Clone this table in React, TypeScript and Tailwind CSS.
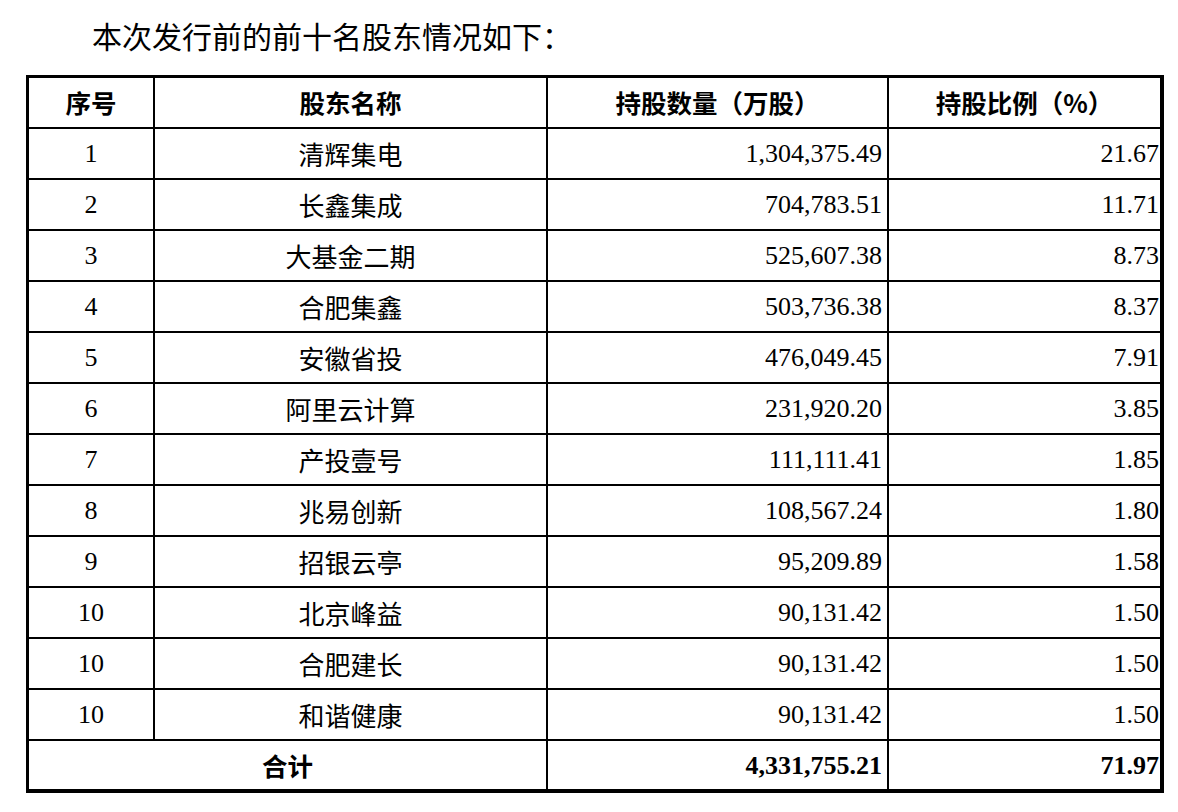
import React from "react";

const rows: [string, string, string, string][] = [
  ["1", "清辉集电", "1,304,375.49", "21.67"],
  ["2", "长鑫集成", "704,783.51", "11.71"],
  ["3", "大基金二期", "525,607.38", "8.73"],
  ["4", "合肥集鑫", "503,736.38", "8.37"],
  ["5", "安徽省投", "476,049.45", "7.91"],
  ["6", "阿里云计算", "231,920.20", "3.85"],
  ["7", "产投壹号", "111,111.41", "1.85"],
  ["8", "兆易创新", "108,567.24", "1.80"],
  ["9", "招银云亭", "95,209.89", "1.58"],
  ["10", "北京峰益", "90,131.42", "1.50"],
  ["10", "合肥建长", "90,131.42", "1.50"],
  ["10", "和谐健康", "90,131.42", "1.50"],
];

export default function App() {
  return (
    <div className="w-[1178px] h-[812px] bg-white overflow-hidden text-black font-['Liberation_Serif','Noto_Sans_CJK_SC',serif]">
      <div className="h-[75px] pl-[92px] pt-[19px] text-[30px] leading-[32px] font-['Noto_Sans_CJK_SC',sans-serif]">
        本次发行前的前十名股东情况如下：
      </div>
      <div className="ml-[26px] w-[1138px] border-black border-t-[3px] border-l-[3px] border-r-[4px] border-b-[4px] flex flex-col">
        <div className="flex h-[51px] border-b-2 border-black text-[25.5px] font-bold font-['Noto_Sans_CJK_SC',sans-serif]">
          <div className="w-[126px] border-r-2 border-black flex items-center justify-center">序号</div>
          <div className="w-[393px] border-r-2 border-black flex items-center justify-center">股东名称</div>
          <div className="w-[341px] border-r-2 border-black flex items-center justify-center">持股数量（万股）</div>
          <div className="flex-1 flex items-center justify-center">持股比例（%）</div>
        </div>
        {rows.map((r, i) => (
          <div key={i} className="flex h-[51px] border-b-2 border-black text-[26px]">
            <div className="w-[126px] border-r-2 border-black flex items-center justify-center">{r[0]}</div>
            <div className="w-[393px] border-r-2 border-black flex items-center justify-center font-['Noto_Sans_CJK_SC',sans-serif] text-[26px]">{r[1]}</div>
            <div className="w-[341px] border-r-2 border-black flex items-center justify-end pr-[5px]">{r[2]}</div>
            <div className="flex-1 flex items-center justify-end pr-[1px]">{r[3]}</div>
          </div>
        ))}
        <div className="flex h-[48px] text-[26px] font-bold">
          <div className="w-[519px] border-r-2 border-black flex items-center justify-center font-['Noto_Sans_CJK_SC',sans-serif] text-[25.5px]">合计</div>
          <div className="w-[341px] border-r-2 border-black flex items-center justify-end pr-[5px]">4,331,755.21</div>
          <div className="flex-1 flex items-center justify-end pr-[1px]">71.97</div>
        </div>
      </div>
    </div>
  );
}
